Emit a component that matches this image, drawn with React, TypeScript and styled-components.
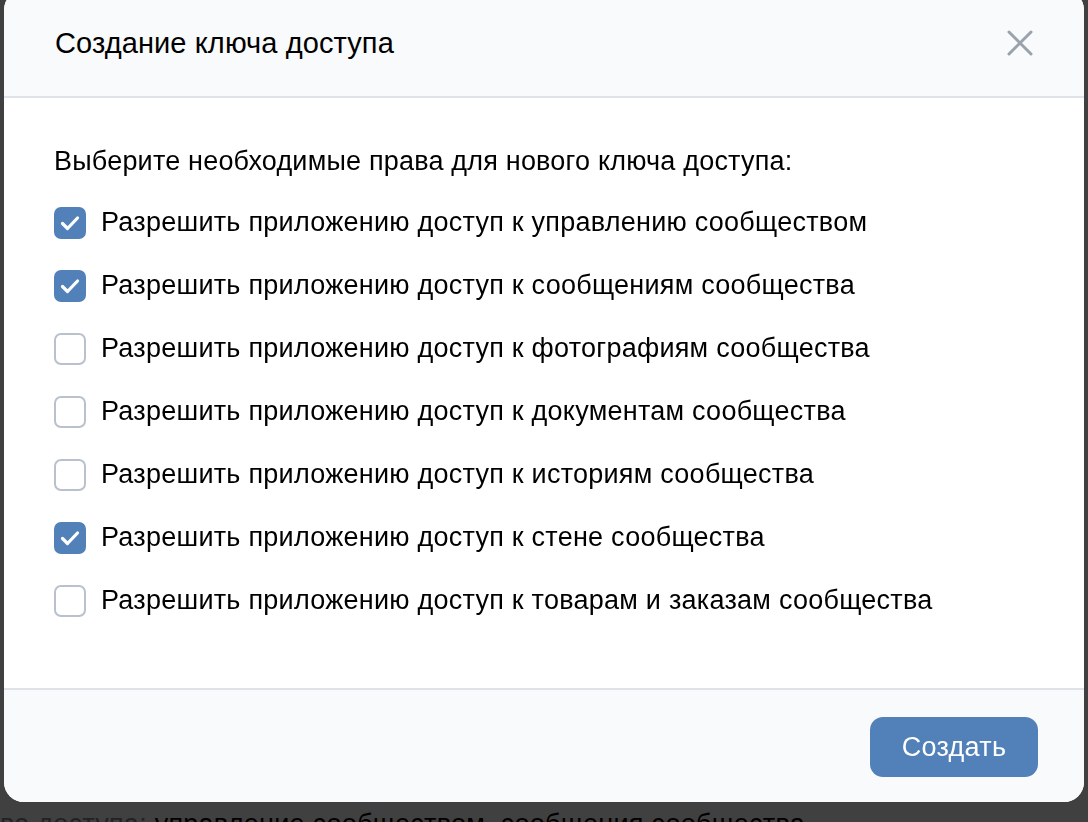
import React, { useState } from "react";
import styled, { createGlobalStyle } from "styled-components";

const GlobalStyle = createGlobalStyle`
  html, body {
    margin: 0;
    padding: 0;
    height: 100%;
    overflow: hidden;
  }
  body {
    font-family: "Liberation Sans", Arial, sans-serif;
    background: #ffffff;
  }
`;

const Page = styled.div`
  height: 822px;
  overflow: hidden;
  display: flex;
  flex-direction: column;
  justify-content: flex-end;
  background: #ffffff;
  color: #000000;
  font-size: 27px;
  letter-spacing: 0.25px;
`;

const PageLine = styled.div`
  line-height: 32px;
  margin-bottom: -18px;
  white-space: nowrap;
`;

const Muted = styled.span`
  color: #818c99;
`;

const Backdrop = styled.div`
  position: fixed;
  inset: 0;
  background: rgba(0, 0, 0, 0.75);
  display: flex;
  align-items: flex-start;
  padding-left: 4px;
`;

const Modal = styled.div`
  width: 1080px;
  height: 812px;
  margin-top: -10px;
  border-radius: 20px;
  background: #ffffff;
  overflow: hidden;
  display: flex;
  flex-direction: column;
  color: #000000;
`;

const Header = styled.div`
  height: 108px;
  flex-shrink: 0;
  box-sizing: border-box;
  padding: 0 48px 0 51px;
  display: flex;
  align-items: center;
  justify-content: space-between;
  background: #f9fafb;
  border-bottom: 2px solid #dfe2e6;
`;

const Title = styled.h2`
  margin: 0;
  font-size: 29px;
  font-weight: 400;
  letter-spacing: 0.1px;
`;

const CloseButton = styled.button`
  border: none;
  background: none;
  padding: 0;
  width: 32px;
  height: 32px;
  display: flex;
  align-items: center;
  justify-content: center;
  cursor: pointer;
`;

const Body = styled.div`
  flex: 1;
  padding: 47px 50px 0 50px;
`;

const Lead = styled.p`
  margin: 0 0 14px 0;
  font-size: 27px;
  line-height: 32px;
  letter-spacing: 0.2px;
`;

const Row = styled.label`
  height: 63px;
  display: flex;
  align-items: center;
  gap: 15px;
  cursor: pointer;
  font-size: 27px;
  letter-spacing: 0.25px;
`;

const Box = styled.span<{ $checked: boolean }>`
  width: 32px;
  height: 32px;
  box-sizing: border-box;
  border-radius: 7px;
  flex-shrink: 0;
  display: flex;
  align-items: center;
  justify-content: center;
  background: ${(p) => (p.$checked ? "#5181b8" : "#ffffff")};
  border: ${(p) => (p.$checked ? "none" : "2px solid #b8c1cc")};
`;

const Footer = styled.div`
  height: 114px;
  flex-shrink: 0;
  box-sizing: border-box;
  padding: 2px 46px 0 0;
  display: flex;
  align-items: center;
  justify-content: flex-end;
  background: #f9fafb;
  border-top: 2px solid #dfe2e6;
`;

const PrimaryButton = styled.button`
  width: 168px;
  height: 60px;
  border: none;
  border-radius: 13px;
  background: #5181b8;
  color: #ffffff;
  font-family: inherit;
  font-size: 27px;
  letter-spacing: 0.3px;
  cursor: pointer;
`;

const permissions = [
  { text: "Разрешить приложению доступ к управлению сообществом", on: true },
  { text: "Разрешить приложению доступ к сообщениям сообщества", on: true },
  { text: "Разрешить приложению доступ к фотографиям сообщества", on: false },
  { text: "Разрешить приложению доступ к документам сообщества", on: false },
  { text: "Разрешить приложению доступ к историям сообщества", on: false },
  { text: "Разрешить приложению доступ к стене сообщества", on: true },
  { text: "Разрешить приложению доступ к товарам и заказам сообщества", on: false },
];

function Check() {
  return (
    <svg width="32" height="32" viewBox="0 0 32 32" fill="none">
      <path
        d="M8.5 16.5 L13.5 21.5 L23.5 11"
        stroke="#ffffff"
        strokeWidth="3.2"
        strokeLinecap="round"
        strokeLinejoin="round"
      />
    </svg>
  );
}

function CloseIcon() {
  return (
    <svg width="28" height="28" viewBox="0 0 28 28" fill="none">
      <path
        d="M3 3 L25 25 M25 3 L3 25"
        stroke="#99a2ad"
        strokeWidth="3"
        strokeLinecap="round"
      />
    </svg>
  );
}

export default function App() {
  const [checked, setChecked] = useState(permissions.map((p) => p.on));

  const toggle = (i: number) => {
    setChecked((prev) => prev.map((v, j) => (j === i ? !v : v)));
  };

  return (
    <>
      <GlobalStyle />
      <Page>
        <PageLine>
          <Muted>ва доступа: </Muted>управление сообществом, сообщения сообщества
        </PageLine>
      </Page>
      <Backdrop>
        <Modal>
          <Header>
            <Title>Создание ключа доступа</Title>
            <CloseButton aria-label="Закрыть">
              <CloseIcon />
            </CloseButton>
          </Header>
          <Body>
            <Lead>Выберите необходимые права для нового ключа доступа:</Lead>
            {permissions.map((p, i) => (
              <Row key={p.text} onClick={() => toggle(i)}>
                <Box $checked={checked[i]}>{checked[i] && <Check />}</Box>
                {p.text}
              </Row>
            ))}
          </Body>
          <Footer>
            <PrimaryButton>Создать</PrimaryButton>
          </Footer>
        </Modal>
      </Backdrop>
    </>
  );
}
